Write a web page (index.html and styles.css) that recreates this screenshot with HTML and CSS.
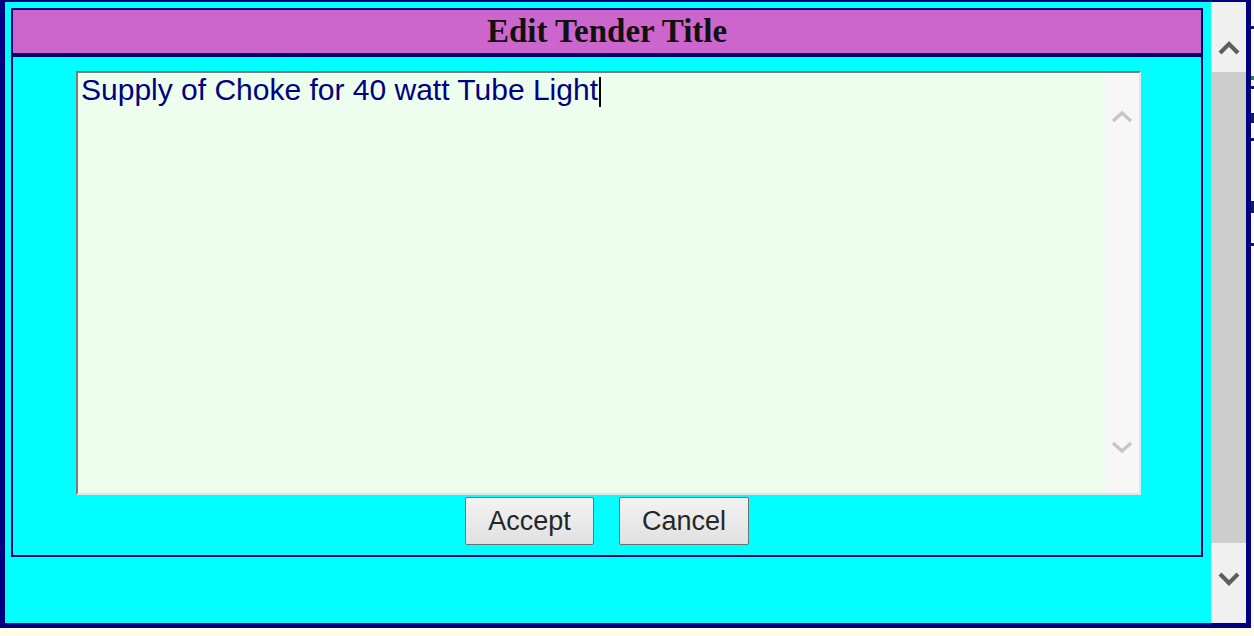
FILE: index.html
```html
<!DOCTYPE html>
<html lang="en">
<head>
<meta charset="utf-8">
<title>Edit Tender Title</title>
<link rel="stylesheet" href="styles.css">
</head>
<body>
<div class="page">
  <div class="frame">
    <div class="frame-main">
      <div class="dialog">
        <div class="dialog-title">Edit Tender Title</div>
        <div class="dialog-body">
          <div class="textbox">
            <div class="textbox-text">Supply of Choke for 40 watt Tube Light<span class="caret"></span></div>
            <div class="textbox-scroll">
              <svg width="24" height="15" viewBox="0 0 24 15"><path d="M3 12 L12 4 L21 12" fill="none" stroke="#c6c6c6" stroke-width="3.4"/></svg>
              <svg width="24" height="15" viewBox="0 0 24 15"><path d="M3 3 L12 11 L21 3" fill="none" stroke="#c6c6c6" stroke-width="3.4"/></svg>
            </div>
          </div>
          <div class="buttons">
            <button class="btn btn-accept">Accept</button>
            <button class="btn btn-cancel">Cancel</button>
          </div>
        </div>
      </div>
    </div>
    <div class="vscroll">
      <div class="vs-up">
        <svg width="24" height="16" viewBox="0 0 24 16"><path d="M3 13 L12 4 L21 13" fill="none" stroke="#5e5e5e" stroke-width="4.2"/></svg>
      </div>
      <div class="vs-thumb"></div>
      <div class="vs-down">
        <svg width="24" height="16" viewBox="0 0 24 16"><path d="M3 3 L12 12 L21 3" fill="none" stroke="#5e5e5e" stroke-width="4.2"/></svg>
      </div>
    </div>
  </div>
  <div class="edge">
    <span class="mark m1"></span>
    <span class="mark m2 green"></span>
    <span class="mark m3"></span>
    <span class="mark m4"></span>
    <span class="mark m5"></span>
    <span class="mark m6"></span>
    <span class="mark m7"></span>
  </div>
</div>
</body>
</html>
```

FILE: styles.css
```css
html, body {
  margin: 0;
  padding: 0;
}

body {
  background: #fffde8;
  font-family: "Liberation Sans", Arial, sans-serif;
  width: 1254px;
  height: 636px;
  overflow: hidden;
}

.page {
  display: flex;
  height: 628px;
}

.frame {
  width: 1241px;
  height: 621px;
  border: 5px solid #000080;
  border-top-width: 2px;
  background: #00ffff;
  display: flex;
}

.frame-main {
  width: 1206px;
  padding: 6px 0 0 6px;
  box-sizing: border-box;
}

.dialog {
  width: 1192px;
}

.dialog-title {
  height: 43px;
  border: 2px solid #00006e;
  background: #cc66cc;
  font-family: "Liberation Serif", "Times New Roman", serif;
  font-weight: bold;
  font-size: 33px;
  line-height: 42px;
  text-align: center;
  color: #111;
}

.dialog-body {
  border: 2px solid #00006e;
  padding: 14px 0 10px;
  display: flex;
  flex-direction: column;
  align-items: center;
}

.textbox {
  width: 1065px;
  height: 424px;
  margin-left: 3px;
  box-sizing: border-box;
  border: 2px solid;
  border-color: #7d7d7d #e4e4e4 #e4e4e4 #7d7d7d;
  background: #eefeee;
  display: flex;
}

.textbox-text {
  flex: 1;
  padding: 0 3px;
  font-family: "Liberation Sans", Arial, sans-serif;
  font-size: 30px;
  line-height: 34px;
  color: #000080;
  white-space: nowrap;
}

.caret {
  display: inline-block;
  width: 0;
  height: 30px;
  border-left: 2px solid #000;
  vertical-align: -7px;
  margin-left: 1px;
}

.textbox-scroll {
  width: 34px;
  background: #f7f7f7;
  display: flex;
  flex-direction: column;
  justify-content: space-between;
  align-items: center;
  padding: 36px 0 38px;
  box-sizing: border-box;
}

.buttons {
  display: flex;
  gap: 25px;
  margin-top: 2px;
}

.btn {
  height: 48px;
  padding: 0;
  border: 1px solid #707070;
  border-radius: 2px;
  background: linear-gradient(#f3f3f3, #e0e0e0);
  font-family: "Liberation Sans", Arial, sans-serif;
  font-size: 27px;
  color: #262626;
}

.btn-accept {
  width: 129px;
}

.btn-cancel {
  width: 130px;
}

.vscroll {
  width: 35px;
  display: flex;
  flex-direction: column;
  background: #f0f0f0;
}

.vs-up {
  height: 70px;
  display: flex;
  justify-content: center;
  padding-top: 38px;
  box-sizing: border-box;
}

.vs-thumb {
  height: 471px;
  background: #cdcdcd;
}

.vs-down {
  flex: 1;
  display: flex;
  justify-content: center;
  padding-top: 28px;
}

.edge {
  width: 3px;
  background: #fafafa;
  display: flex;
  flex-direction: column;
}

.mark {
  display: block;
  width: 3px;
  background: #1a1a5a;
}

.m1 { height: 3px; margin-top: 26px; }
.m2 { height: 4px; margin-top: 47px; }
.green { background: #2a8a3a; }
.m3 { height: 3px; margin-top: 6px; }
.m4 { height: 10px; margin-top: 24px; }
.m5 { height: 3px; margin-top: 15px; }
.m6 { height: 12px; margin-top: 60px; }
.m7 { height: 3px; margin-top: 30px; }
```
